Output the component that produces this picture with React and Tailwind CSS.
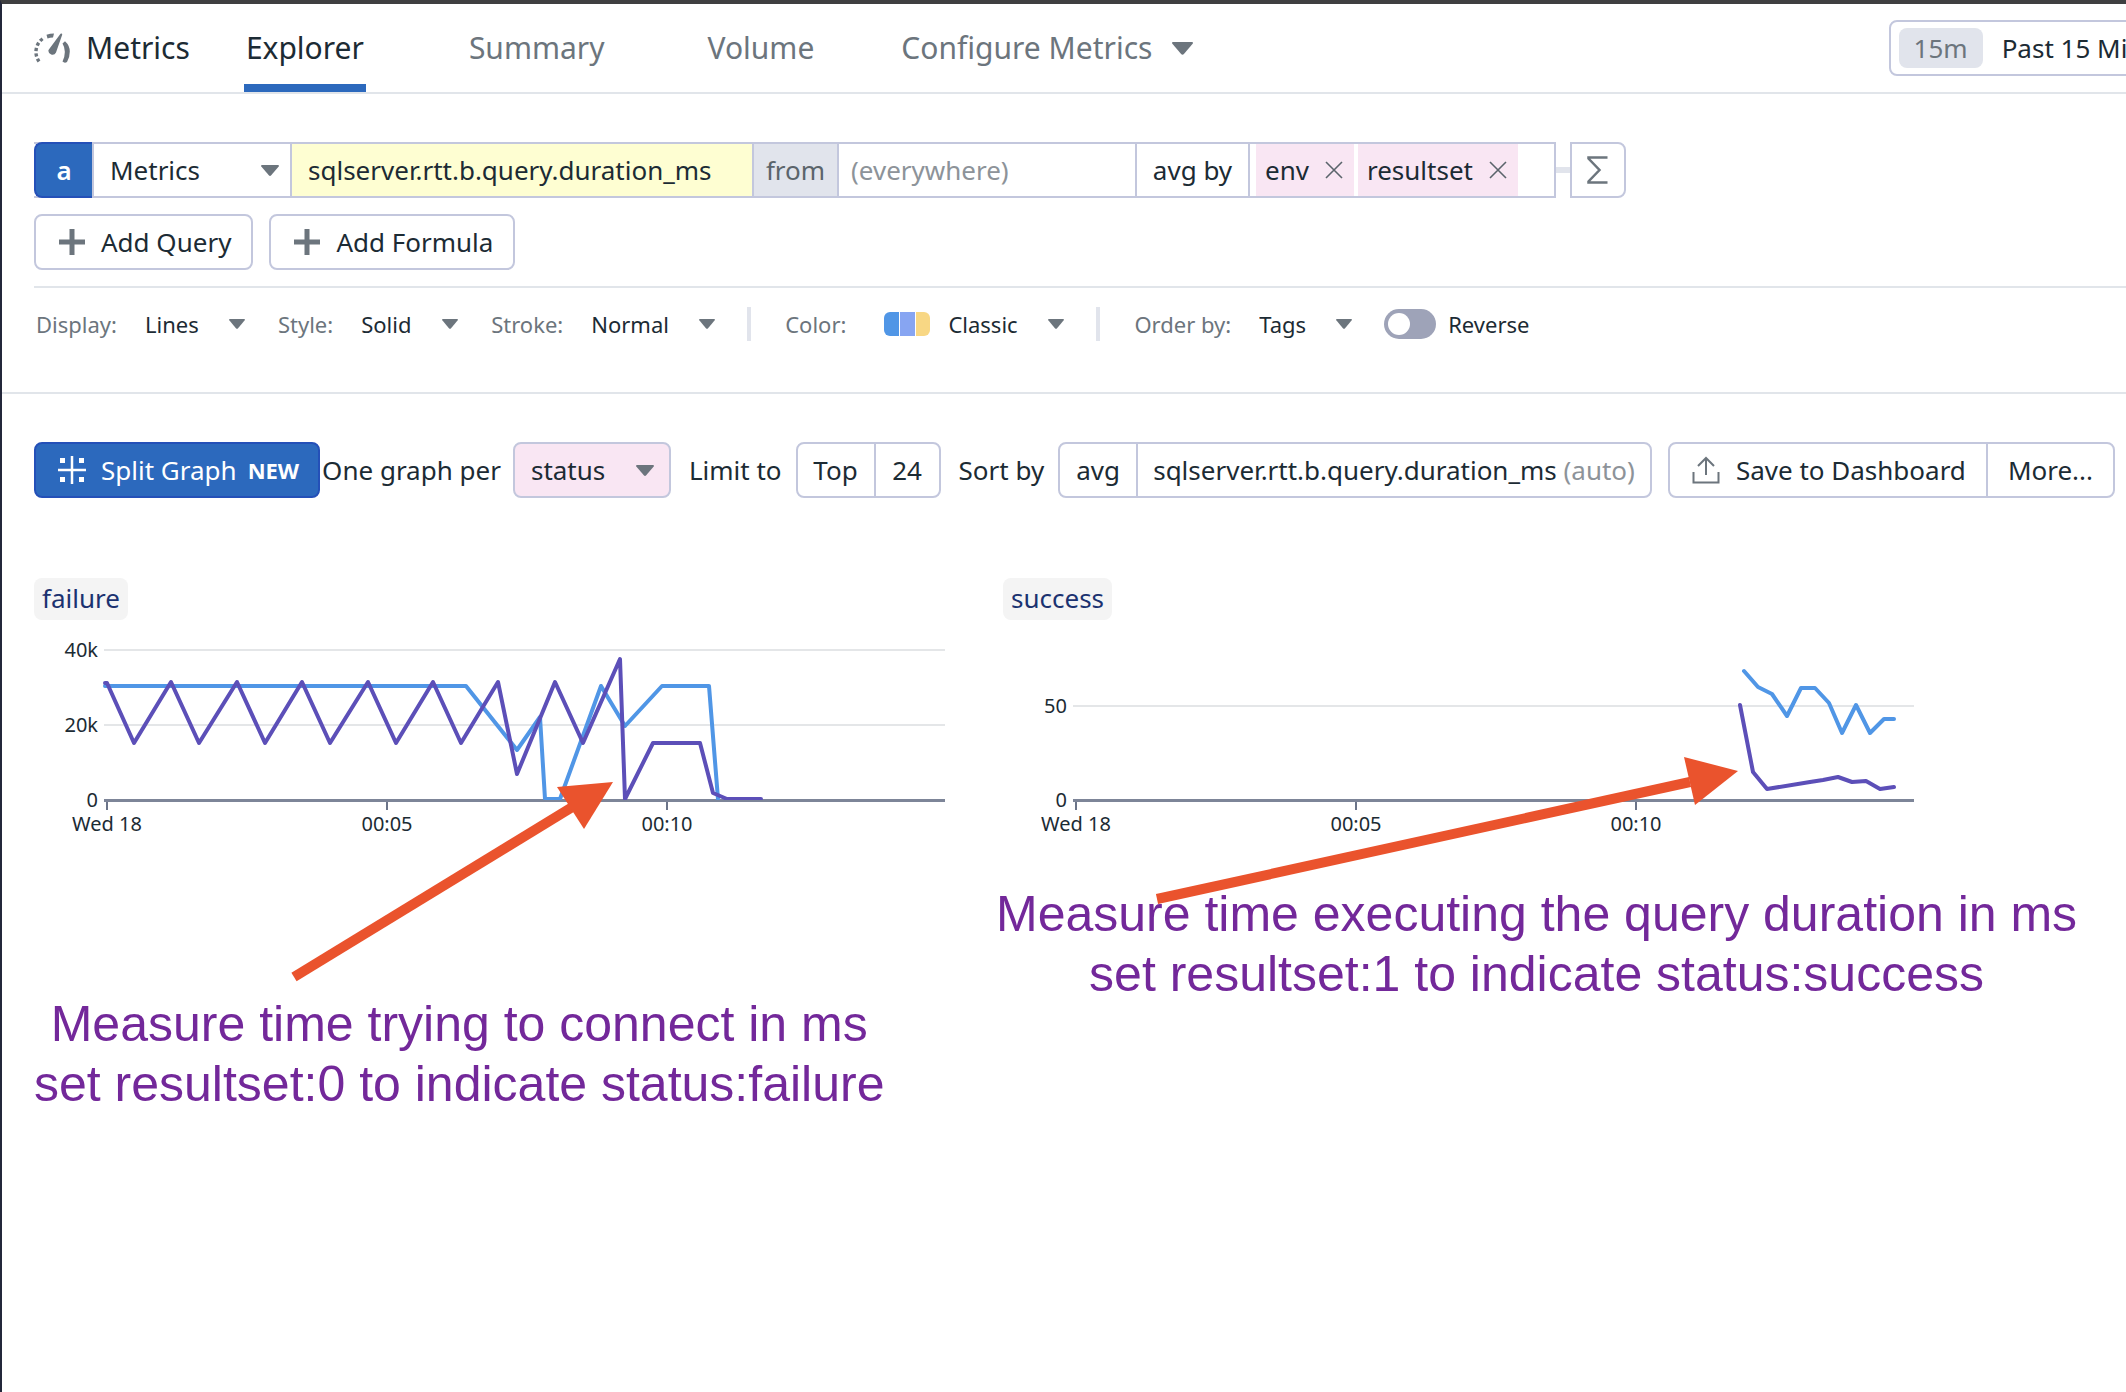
const INK = "text-[#1c2b34]";

function Caret({ className }) {
  return (
    <svg viewBox="0 0 18 11" className={className} aria-hidden="true">
      <path d="M1 0h16c.9 0 1.200.8.7 1.400L10.200 10.300c-.7.8-1.700.8-2.400 0L.3 1.400C-.2.8.1 0 1 0z" fill="#6c757d" />
    </svg>
  );
}

function Gauge() {
  return (
    <svg viewBox="0 0 36 30" className="h-[30px] w-9 shrink-0" aria-hidden="true">
      <path d="M5 28.500A16.500 16.500 0 0 1 10.500 4.500" fill="none" stroke="#6c757d" strokeWidth="3.400" strokeDasharray="3.200 2.300" />
      <path d="M12.500 1.800Q16 .4 20 .4l-1 4q-3 0-5.500 1z" fill="#6c757d" />
      <path d="M26.500.8q1.800-1 1.700.9L22 19.500a4 4 0 0 1-7.500-2.500z" fill="#6c757d" />
      <path d="M28.500 10.500l2.500-2.300q4.800 4.300 4.800 10.300 0 6-2.800 10.500-2.500 1.500-4.500-.5 2.500-5 2.300-10-.1-4.500-2.300-8z" fill="#6c757d" />
    </svg>
  );
}

function Plus() {
  return (
    <svg viewBox="0 0 28 28" className="h-7 w-7 shrink-0" aria-hidden="true">
      <path d="M14 1v26M1 14h26" stroke="#6c757d" strokeWidth="5" />
    </svg>
  );
}

function Close() {
  return (
    <svg viewBox="0 0 18 18" className="h-[18px] w-[18px]" aria-hidden="true">
      <path d="M1 1l16 16M17 1L1 17" stroke="#5b646b" strokeWidth="1.600" />
    </svg>
  );
}

function Tag({ name }) {
  return (
    <span className="flex h-[52px] items-center gap-4 bg-[#f9e6f3] pl-[9px] pr-[11px]">
      {name}
      <button type="button" aria-label={`Remove ${name}`} className="flex items-center">
        <Close />
      </button>
    </span>
  );
}

function Option({ label, value, children }) {
  return (
    <label className="flex items-center whitespace-nowrap">
      <span className="mr-7 text-[#6c757d]">{label}</span>
      {children}
      <select className="appearance-none bg-transparent pr-[46px]">
        <option>{value}</option>
      </select>
      <Caret className="pointer-events-none -ml-4 h-[10px] w-4" />
    </label>
  );
}

function Chart({ title, yTicks, blue, purple }) {
  return (
    <section>
      <h2 className="inline-block rounded-lg bg-[#f4f4f4] px-2 pb-[2px] text-[26px] leading-10 text-[#1b3270]">{title}</h2>
      <svg viewBox="0 0 911 220" className="mt-2 block w-full overflow-visible" role="img" aria-label={`${title} chart`}>
        {yTicks.map((t) => (
          <g key={t.label}>
            {t.y < 172 && <path d={`M70 ${t.y}H911`} stroke="#e4e6e8" strokeWidth="2" />}
            <text x="64" y={t.y + 7} textAnchor="end" fontSize="20" fill="#1c2b34">{t.label}</text>
          </g>
        ))}
        <path d="M73 173v9M353 173v9M633 173v9" stroke="#6b7489" strokeWidth="2" fill="none" />
        <path d="M70 172.500H911" stroke="#7d8598" strokeWidth="3" />
        <polyline points={blue} fill="none" stroke="#5096e6" strokeWidth="4" strokeLinejoin="round" strokeLinecap="round" />
        <polyline points={purple} fill="none" stroke="#5c4fb8" strokeWidth="4" strokeLinejoin="round" strokeLinecap="round" />
        <path d="M70 173H911" stroke="#7d8598" strokeWidth="2" />
        <g fontSize="20" fill="#1c2b34" textAnchor="middle">
          <text x="73" y="203">Wed 18</text>
          <text x="353" y="203">00:05</text>
          <text x="633" y="203">00:10</text>
        </g>
      </svg>
    </section>
  );
}

const failureBlue =
  "71,58 432,58 483,122 506,89 511,171 526,171 567,58 591,98 628,58 675,58 684,171";
const failurePurple =
  "71,55 73,55 100,115 137,54 165,115 203,54 231,115 268,54 296,115 334,54 362,115 399,54 427,115 464,54 483,146 521,54 549,115 586,31 591,171 619,115 666,115 679,165 693,171 727,171";
const successBlue =
  "741,43 755,59 769,66 784,88 798,60 812,60 826,75 839,105 853,77 867,105 881,91 891,91";
const successPurple =
  "737,77 750,144 764,161 807,154 820,152 835,149 849,154 863,153 877,161 891,159";

export default function App() {
  return (
    <div className={`min-h-screen overflow-hidden border-l-2 border-t-4 border-l-[#23273a] border-t-[#3f3f41] bg-white font-['Noto_Sans',sans-serif] text-[26px] leading-9 ${INK}`}>
      <header className="flex h-[90px] items-stretch justify-between border-b-2 border-[#e1e5ea]">
        <div className="flex items-stretch pl-8 text-[30px]">
          <div className="flex items-center gap-4">
            <Gauge />
            <span>Metrics</span>
          </div>
          <nav className="ml-[54px] flex items-stretch gap-[103px] text-[#6c757d]">
            <a href="#explorer" className={`flex items-center border-b-8 border-[#2c69bd] px-[2px] pt-2 ${INK}`}>Explorer</a>
            <a href="#summary" className="flex items-center">Summary</a>
            <a href="#volume" className="flex items-center">Volume</a>
            <button type="button" className="-ml-4 flex items-center gap-5">
              Configure Metrics
              <Caret className="h-[13px] w-[21px]" />
            </button>
          </nav>
        </div>
        <button type="button" className="-mr-20 flex h-14 items-center self-center rounded-lg border-2 border-[#c3c7dd] px-2 whitespace-nowrap">
          <span className="mr-[19px] rounded-lg bg-[#e1e4ec] px-[15px] leading-10 text-[#6c757d]">15m</span>
          Past 15 Minutes
        </button>
      </header>

      <div className="border-b-2 border-[#e1e5ea] pb-[50px] pl-8 pt-12">
        <div className="flex items-center">
          <div className="flex h-14 items-stretch border-2 border-l-0 border-[#c3c7dd]">
            <span className="-my-[2px] flex w-[58px] items-center justify-center rounded-l-lg border-2 border-r-0 border-[#2450b8] bg-[#2c69bd] font-semibold text-white">a</span>
            <div className="flex w-[200px] items-center border-x-2 border-[#c3c7dd] pr-[11px]">
              <select aria-label="Source" className="h-full flex-1 appearance-none pl-4">
                <option>Metrics</option>
              </select>
              <Caret className="pointer-events-none -ml-[18px] h-[11px] w-[18px]" />
            </div>
            <input aria-label="Metric" defaultValue="sqlserver.rtt.b.query.duration_ms" className="w-[460px] bg-[#fefed2] pl-4" />
            <span className="flex w-[87px] items-center justify-center border-x-2 border-[#c3c7dd] bg-[#e1e4ec] text-[#5b646b]">from</span>
            <input aria-label="From" placeholder="(everywhere)" className="w-[296px] pl-3 placeholder:text-[#8d9399]" />
            <button type="button" className="w-[115px] border-x-2 border-[#c3c7dd]">avg by</button>
            <div className="flex gap-1 pl-[6px] pr-9">
              <Tag name="env" />
              <Tag name="resultset" />
            </div>
          </div>
          <span className="h-[6px] w-[14px] bg-[#e1e4ec]" />
          <button type="button" aria-label="Add function" className="flex h-14 w-14 items-center justify-center rounded-r-lg border-2 border-[#c3c7dd]">
            <svg viewBox="0 0 22 28" className="h-7 w-[22px]" aria-hidden="true">
              <path d="M20.500 1.500H1.500v1L12.500 14 1.500 25.500v1h19" fill="none" stroke="#6c757d" strokeWidth="2.500" />
            </svg>
          </button>
        </div>

        <div className="mt-4 flex gap-4">
          <button type="button" className="flex h-14 items-center gap-[15px] rounded-lg border-2 border-[#c3c7dd] pl-[22px] pr-5">
            <Plus />Add Query
          </button>
          <button type="button" className="flex h-14 items-center gap-[15px] rounded-lg border-2 border-[#c3c7dd] pl-[22px] pr-5">
            <Plus />Add Formula
          </button>
        </div>

        <div className="mt-4 flex items-center border-t-2 border-[#e1e5ea] pl-[2px] pt-[18px] text-[22px]">
          <div className="flex gap-[33px]">
            <Option label="Display:" value="Lines" />
            <Option label="Style:" value="Solid" />
            <Option label="Stroke:" value="Normal" />
          </div>
          <span className="ml-8 mr-[34px] h-[34px] w-1 bg-[#e1e4ec]" />
          <Option label="Color:" value="Classic">
            <span className="ml-[10px] mr-[18px] flex h-6 w-[46px] gap-[1px] overflow-hidden rounded-md">
              <i className="flex-1 bg-[#5096e6]" />
              <i className="flex-1 bg-[#87a5f2]" />
              <i className="flex-1 bg-[#f8d784]" />
            </span>
          </Option>
          <span className="ml-8 mr-[34px] h-[34px] w-1 bg-[#e1e4ec]" />
          <Option label="Order by:" value="Tags" />
          <label className="ml-8 flex items-center gap-3">
            <input
              type="checkbox"
              className="flex h-[30px] w-[52px] appearance-none items-center rounded-full bg-[#9ea3b8] px-1 before:block before:h-[22px] before:w-[22px] before:rounded-full before:bg-white before:content-['']"
            />
            Reverse
          </label>
        </div>
      </div>

      <div className="flex items-center whitespace-nowrap pl-8 pt-12">
        <button type="button" className="flex h-14 items-center rounded-lg border-2 border-[#2450b8] bg-[#2c69bd] pl-[22px] pr-[19px] text-white">
          <svg viewBox="0 0 28 28" className="mr-[15px] h-7 w-7" aria-hidden="true">
            <path d="M14 0v28M0 14h28" stroke="#fff" strokeWidth="2.500" />
            <path d="M2 2h5v5H2zM21 2h5v5h-5zM2 21h5v5H2zM21 21h5v5h-5z" fill="#fff" />
          </svg>
          Split Graph
          <b className="ml-[11px] text-[22px] font-bold">NEW</b>
        </button>
        <label htmlFor="split-by" className="ml-[2px]">One graph per</label>
        <div className="ml-3 flex h-14 w-[158px] items-center rounded-lg border-2 border-[#c3c7dd] bg-[#f9e6f3] pr-[15px]">
          <select id="split-by" className="h-full flex-1 appearance-none bg-transparent pl-4">
            <option>status</option>
          </select>
          <Caret className="pointer-events-none -ml-[18px] h-[11px] w-[18px]" />
        </div>
        <span className="ml-[18px]">Limit to</span>
        <div className="ml-[14px] flex h-14 items-stretch rounded-lg border-2 border-[#c3c7dd]">
          <button type="button" className="w-[76px]">Top</button>
          <button type="button" className="w-[65px] border-l-2 border-[#c3c7dd]">24</button>
        </div>
        <span className="ml-[18px]">Sort by</span>
        <div className="ml-[14px] flex h-14 items-stretch rounded-lg border-2 border-[#c3c7dd]">
          <button type="button" className="w-[76px]">avg</button>
          <button type="button" className="border-l-2 border-[#c3c7dd] px-[15px]">
            sqlserver.rtt.b.query.duration_ms <span className="text-[#8d9399]">(auto)</span>
          </button>
        </div>
        <div className="ml-4 flex h-14 items-stretch rounded-lg border-2 border-[#c3c7dd]">
          <button type="button" className="flex items-center gap-4 pl-[22px] pr-5">
            <svg viewBox="0 0 28 28" className="h-7 w-7" aria-hidden="true">
              <path d="M14 19V2M6 10l8-8 8 8M1.500 16v10.500h25V16" fill="none" stroke="#6c757d" strokeWidth="2" />
            </svg>
            Save to Dashboard
          </button>
          <button type="button" className="border-l-2 border-[#c3c7dd] px-5">More...</button>
        </div>
      </div>

      <main className="relative mt-20 grid grid-cols-2 gap-[58px] pl-8 pr-[212px]">
        <Chart
          title="failure"
          yTicks={[{ y: 22, label: "40k" }, { y: 97, label: "20k" }, { y: 172, label: "0" }]}
          blue={failureBlue}
          purple={failurePurple}
        />
        <Chart
          title="success"
          yTicks={[{ y: 78, label: "50" }, { y: 172, label: "0" }]}
          blue={successBlue}
          purple={successPurple}
        />
        <svg viewBox="0 0 2124 560" className="pointer-events-none absolute left-0 top-0 w-full" aria-hidden="true">
          <g fill="#ea532d" stroke="#ea532d">
            <path d="M292 399L572 228" strokeWidth="10" />
            <path d="M611 204L555 209L582 251Z" stroke="none" />
            <path d="M1155 321L1688 204" strokeWidth="10" />
            <path d="M1736 193L1682 179L1693 227Z" stroke="none" />
          </g>
        </svg>
        <p className="absolute left-8 top-[416px] text-center font-['Liberation_Sans',sans-serif] text-[50px] leading-[60px] whitespace-nowrap text-[#73289a]">
          Measure time trying to connect in ms
          <br />
          set resultset:0 to indicate status:failure
        </p>
        <p className="absolute left-[994px] top-[306px] text-center font-['Liberation_Sans',sans-serif] text-[50px] leading-[60px] whitespace-nowrap text-[#73289a]">
          Measure time executing the query duration in ms
          <br />
          set resultset:1 to indicate status:success
        </p>
      </main>
    </div>
  );
}
